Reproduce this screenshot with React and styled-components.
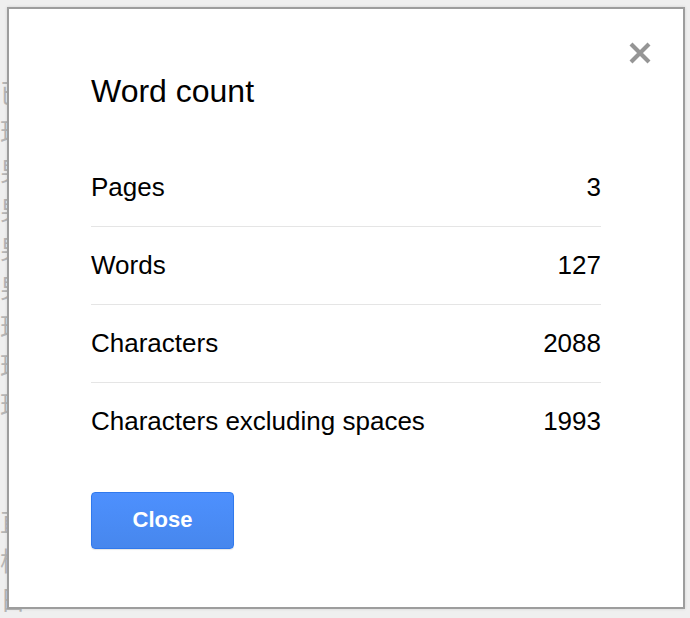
import styled, { createGlobalStyle } from 'styled-components';

const GlobalStyle = createGlobalStyle`
  html, body {
    margin: 0;
    padding: 0;
    background: #eeeeee;
  }
  body {
    font-family: "Liberation Sans", Arial, "Noto Sans CJK SC", sans-serif;
  }
`;

const stats = [
  { label: 'Pages', value: '3' },
  { label: 'Words', value: '127' },
  { label: 'Characters', value: '2088' },
  { label: 'Characters excluding spaces', value: '1993' },
];

const docLines = ['已', '理', '男', '男', '男', '男', '理', '理', '理', '', '', '直', '権', '日'];

const App = () => {
  return (
    <>
      <GlobalStyle />
      <Page>
        <DocText>
          {docLines.map((ch, i) => (
            <DocLine key={i}>{ch || '\u00a0'}</DocLine>
          ))}
        </DocText>
        <Dialog>
          <CloseIcon aria-label="Close">
            <svg width="24" height="24" viewBox="0 0 24 24">
              <path d="M3 3 L21 21 M21 3 L3 21" stroke="#959595" strokeWidth="4.2" fill="none" />
            </svg>
          </CloseIcon>
          <Title>Word count</Title>
          <StatList>
            {stats.map((s, i) => (
              <StatRow key={s.label} last={i === stats.length - 1}>
                <span>{s.label}</span>
                <span>{s.value}</span>
              </StatRow>
            ))}
          </StatList>
          <CloseBtn>Close</CloseBtn>
        </Dialog>
      </Page>
    </>
  );
};

const Page = styled.div`
  position: relative;
  width: 690px;
  height: 618px;
  overflow: hidden;
  background: #efefef;
`;

// document text behind the dialog, only a sliver shows at the left edge
const DocText = styled.div`
  display: flex;
  flex-direction: column;
  padding-top: 72px;
  font-family: "Noto Sans CJK SC", sans-serif;
  font-size: 26px;
  line-height: 39px;
  color: #b5b5b5;
`;

const DocLine = styled.div``;

const Dialog = styled.div`
  position: absolute;
  top: 7px;
  left: 7px;
  width: 678px;
  height: 602px;
  box-sizing: border-box;
  background: #ffffff;
  border: 2px solid #9d9d9d;
  box-shadow: 0 0 3px rgba(0, 0, 0, 0.12);
  padding: 64px 82px 0 82px;
  display: flex;
  flex-direction: column;
  align-items: flex-start;
`;

const CloseIcon = styled.div`
  position: absolute;
  top: 32px;
  right: 31px;
  width: 24px;
  height: 24px;
  cursor: pointer;
`;

const Title = styled.h1`
  margin: 0 0 39px 0;
  font-size: 32px;
  line-height: 37px;
  font-weight: normal;
  color: #000;
`;

const StatList = styled.div`
  align-self: stretch;
  display: flex;
  flex-direction: column;
`;

const StatRow = styled.div`
  display: flex;
  justify-content: space-between;
  align-items: center;
  height: 77px;
  font-size: 26px;
  color: #000;
  border-bottom: ${(p) => (p.last ? 'none' : '1px solid #e5e5e5')};
`;

const CloseBtn = styled.button`
  margin-top: 32px;
  width: 143px;
  height: 57px;
  padding: 0 0 2px 0;
  border: 1px solid #3079ed;
  border-radius: 4px;
  background: linear-gradient(#4d90fe, #4787ed);
  color: #fff;
  font-family: "Liberation Sans", Arial, sans-serif;
  font-size: 22px;
  font-weight: bold;
  box-shadow: 0 1px 1px rgba(0, 0, 0, 0.1);
  cursor: pointer;
`;

export default App;
